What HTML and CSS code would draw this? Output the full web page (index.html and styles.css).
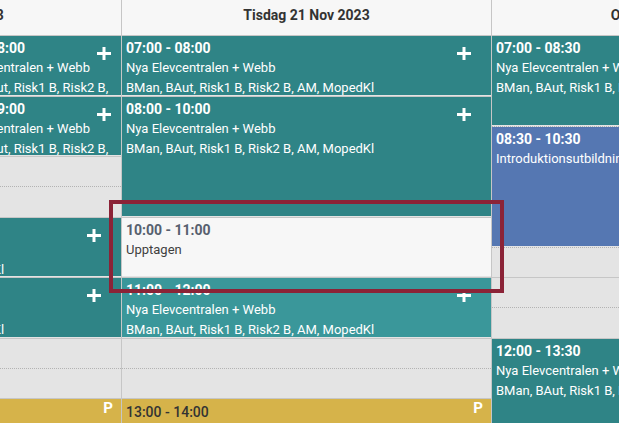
FILE: index.html
```html
<!DOCTYPE html>
<html lang="sv">
<head>
  <meta charset="UTF-8" />
  <title>Bokning - vecka 47</title>
  <link rel="stylesheet" href="styles.css">
</head>
<body>

  <div class="calendar">
    <div class="days">

      <!-- Måndag: två parallella spår före 09:00 -->
      <div class="day day-split">
        <div class="day-head">Måndag 20 Nov 2023</div>
        <div class="day-body">
          <div class="slots">
            <div class="slot"></div><div class="slot"></div><div class="slot"></div><div class="slot"></div>
            <div class="slot"></div><div class="slot"></div><div class="slot"></div><div class="slot"></div>
            <div class="slot"></div><div class="slot"></div><div class="slot"></div><div class="slot"></div>
            <div class="slot"></div><div class="slot"></div>
          </div>
          <div class="event teal left-half" style="grid-row: 1 / 3">
            <div class="ev-time">07:00 - 08:00</div>
            <div class="ev-title">Körlektion B</div>
            <div class="ev-info">BMan</div>
          </div>
          <div class="event teal right-half" style="grid-row: 1 / 3">
            <div class="ev-time">07:00 - 08:00</div>
            <div class="ev-title">Nya Elevcentralen + Webb</div>
            <div class="ev-info">BMan, BAut, Risk1 B, Risk2 B, AM, MopedKl</div>
            <svg class="ev-add" width="14" height="13" viewBox="0 0 14 13"><path d="M7 0v13M0 6.5h14" stroke="#fff" stroke-width="3"/></svg>
          </div>
          <div class="event teal right-half" style="grid-row: 3 / 5">
            <div class="ev-time">08:00 - 09:00</div>
            <div class="ev-title">Nya Elevcentralen + Webb</div>
            <div class="ev-info">BMan, BAut, Risk1 B, Risk2 B, AM, MopedKl</div>
            <svg class="ev-add" width="14" height="13" viewBox="0 0 14 13"><path d="M7 0v13M0 6.5h14" stroke="#fff" stroke-width="3"/></svg>
          </div>
          <div class="event teal" style="grid-row: 7 / 9">
            <div class="ev-time">10:00 - 11:00</div>
            <div class="ev-title">Nya Elevcentralen + Webb</div>
            <div class="ev-info">BMan, BAut, Risk1 B, Risk2 B, AM, MopedKl</div>
            <svg class="ev-add" width="14" height="13" viewBox="0 0 14 13"><path d="M7 0v13M0 6.5h14" stroke="#fff" stroke-width="3"/></svg>
          </div>
          <div class="event teal" style="grid-row: 9 / 11">
            <div class="ev-time">11:00 - 12:00</div>
            <div class="ev-title">Nya Elevcentralen + Webb</div>
            <div class="ev-info">BMan, BAut, Risk1 B, Risk2 B, AM, MopedKl</div>
            <svg class="ev-add" width="14" height="13" viewBox="0 0 14 13"><path d="M7 0v13M0 6.5h14" stroke="#fff" stroke-width="3"/></svg>
          </div>
          <div class="event yellow" style="grid-row: 13 / 15">
            <div class="ev-time">13:00 - 14:00</div>
            <span class="ev-badge">P</span>
          </div>
        </div>
      </div>

      <!-- Tisdag -->
      <div class="day">
        <div class="day-head">Tisdag 21 Nov 2023</div>
        <div class="day-body">
          <div class="slots">
            <div class="slot"></div><div class="slot"></div><div class="slot"></div><div class="slot"></div>
            <div class="slot"></div><div class="slot"></div><div class="slot"></div><div class="slot"></div>
            <div class="slot"></div><div class="slot"></div><div class="slot"></div><div class="slot"></div>
            <div class="slot"></div><div class="slot"></div>
          </div>
          <div class="event teal" style="grid-row: 1 / 3">
            <div class="ev-time">07:00 - 08:00</div>
            <div class="ev-title">Nya Elevcentralen + Webb</div>
            <div class="ev-info">BMan, BAut, Risk1 B, Risk2 B, AM, MopedKl</div>
            <svg class="ev-add" width="14" height="13" viewBox="0 0 14 13"><path d="M7 0v13M0 6.5h14" stroke="#fff" stroke-width="3"/></svg>
          </div>
          <div class="event teal" style="grid-row: 3 / 7">
            <div class="ev-time">08:00 - 10:00</div>
            <div class="ev-title">Nya Elevcentralen + Webb</div>
            <div class="ev-info">BMan, BAut, Risk1 B, Risk2 B, AM, MopedKl</div>
            <svg class="ev-add" width="14" height="13" viewBox="0 0 14 13"><path d="M7 0v13M0 6.5h14" stroke="#fff" stroke-width="3"/></svg>
          </div>
          <div class="event busy" style="grid-row: 7 / 9">
            <div class="ev-time">10:00 - 11:00</div>
            <div class="ev-title">Upptagen</div>
          </div>
          <div class="event teal hover" style="grid-row: 9 / 11">
            <div class="ev-time">11:00 - 12:00</div>
            <div class="ev-title">Nya Elevcentralen + Webb</div>
            <div class="ev-info">BMan, BAut, Risk1 B, Risk2 B, AM, MopedKl</div>
            <svg class="ev-add" width="14" height="13" viewBox="0 0 14 13"><path d="M7 0v13M0 6.5h14" stroke="#fff" stroke-width="3"/></svg>
          </div>
          <div class="event yellow" style="grid-row: 13 / 15">
            <div class="ev-time">13:00 - 14:00</div>
            <span class="ev-badge">P</span>
          </div>
        </div>
      </div>

      <!-- Onsdag -->
      <div class="day">
        <div class="day-head">Onsdag 22 Nov 2023</div>
        <div class="day-body">
          <div class="slots">
            <div class="slot"></div><div class="slot"></div><div class="slot"></div><div class="slot"></div>
            <div class="slot"></div><div class="slot"></div><div class="slot"></div><div class="slot"></div>
            <div class="slot"></div><div class="slot"></div><div class="slot"></div><div class="slot"></div>
            <div class="slot"></div><div class="slot"></div>
          </div>
          <div class="event teal" style="grid-row: 1 / 4">
            <div class="ev-time">07:00 - 08:30</div>
            <div class="ev-title">Nya Elevcentralen + Webb</div>
            <div class="ev-info">BMan, BAut, Risk1 B, Risk2 B, AM, MopedKl</div>
            <svg class="ev-add" width="14" height="13" viewBox="0 0 14 13"><path d="M7 0v13M0 6.5h14" stroke="#fff" stroke-width="3"/></svg>
          </div>
          <div class="event blue" style="grid-row: 4 / 8">
            <div class="ev-time">08:30 - 10:30</div>
            <div class="ev-title">Introduktionsutbildning</div>
          </div>
          <div class="event teal" style="grid-row: 11 / 14">
            <div class="ev-time">12:00 - 13:30</div>
            <div class="ev-title">Nya Elevcentralen + Webb</div>
            <div class="ev-info">BMan, BAut, Risk1 B, Risk2 B, AM, MopedKl</div>
            <svg class="ev-add" width="14" height="13" viewBox="0 0 14 13"><path d="M7 0v13M0 6.5h14" stroke="#fff" stroke-width="3"/></svg>
          </div>
        </div>
      </div>

    </div>

    <!-- markering runt den upptagna tiden -->
    <div class="focus-box"></div>
  </div>

</body>
</html>
```

FILE: styles.css
```css
body {
  margin: 0;
  font-family: 'Roboto', 'Liberation Sans', sans-serif;
  background: #e4e4e4;
  overflow: hidden;
}

.calendar {
  position: relative;
  width: 100vw;
  height: 100vh;
  overflow: hidden;
}

/* kalendern är scrollad i sidled, måndag syns bara delvis */
.days {
  display: flex;
  margin-left: -248px;
}

.day {
  flex: none;
  width: 370px;
  box-sizing: border-box;
  border-right: 1px solid #c6c6c6;
}

.day-head {
  height: 30px;
  padding-top: 5px;
  line-height: 20px;
  text-align: center;
  font-size: 14px;
  font-weight: bold;
  color: #333;
  background: #f7f7f7;
  border-bottom: 1px solid #c6c6c6;
  white-space: nowrap;
}

.day-body {
  display: grid;
  grid-template-columns: 1fr;
  grid-template-rows: repeat(14, 30.25px);
}

.day-split .day-body {
  grid-template-columns: 1fr 1fr;
}

.slots {
  grid-row: 1 / -1;
  grid-column: 1 / -1;
  display: flex;
  flex-direction: column;
}

.slot {
  height: 30.25px;
  box-sizing: border-box;
  background: #e4e4e4;
  border-bottom: 1px solid #c6c6c6;
}

.slot:nth-child(odd) {
  border-bottom: 1px dotted #b3b3b3;
}

.event {
  grid-column: 1 / -1;
  position: relative;
  margin-bottom: 2px;
  padding: 2px 4px;
  overflow: hidden;
  color: #fff;
  font-size: 13px;
  line-height: 20px;
}

.event.left-half {
  grid-column: 1;
}

.event.right-half {
  grid-column: 2;
}

.ev-time,
.ev-title {
  white-space: nowrap;
}

.ev-time {
  font-size: 14px;
  font-weight: bold;
}

.ev-add {
  position: absolute;
  top: 11px;
  right: 5.3%;
}

.teal {
  background: #2f8486;
}

.teal.hover {
  background: #3a979a;
}

.blue {
  background: #5577b2;
}

.busy {
  background: #f7f7f7;
  color: #3f3f3f;
}

.busy .ev-time {
  color: #56606e;
}

.yellow {
  background: #d6b34a;
  color: #333;
  padding-top: 3px;
}

.yellow .ev-time {
  font-weight: 500;
}

.ev-badge {
  position: absolute;
  top: 0;
  right: 8px;
  font-size: 15px;
  line-height: 18px;
  font-weight: bold;
  color: #fff;
}

.focus-box {
  position: absolute;
  left: 109px;
  top: 200px;
  width: 395px;
  height: 93px;
  box-sizing: border-box;
  border: 4px solid #8b2337;
}
```
